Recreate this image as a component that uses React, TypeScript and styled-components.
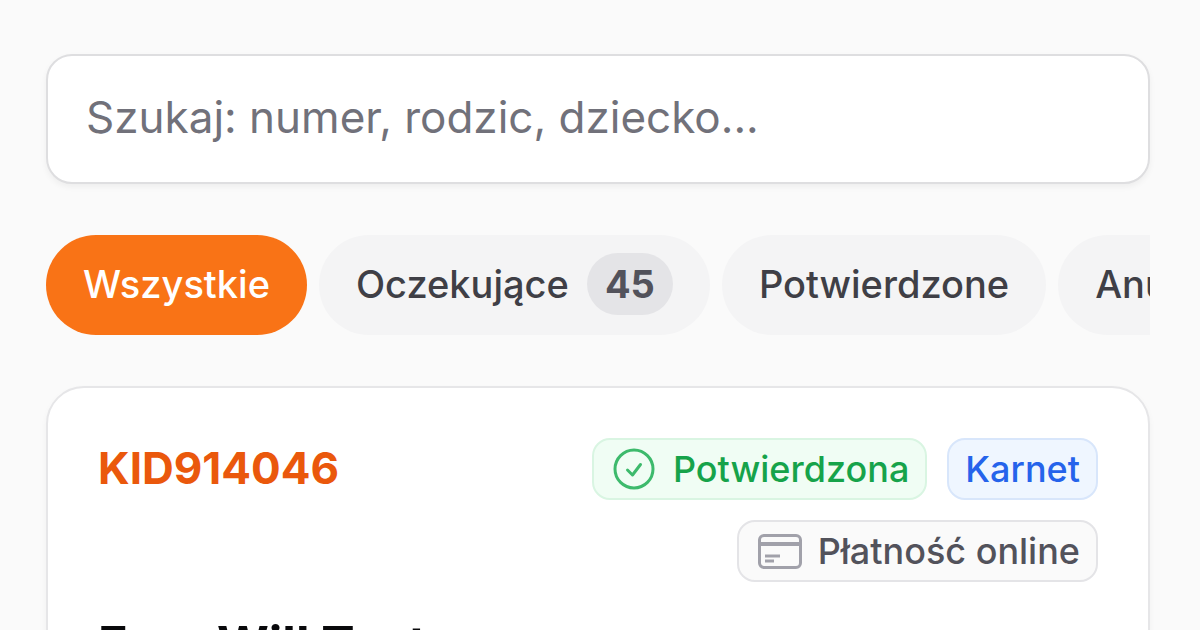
import React from "react";
import styled, { createGlobalStyle, css } from "styled-components";

const GlobalStyle = createGlobalStyle`
  *, *::before, *::after { box-sizing: border-box; }
  html { height: 100%; overflow: hidden; }
  body {
    margin: 0;
    background: #fafafa;
    color: #09090b;
    font-family: Inter, "Liberation Sans", sans-serif;
  }
`;

const Page = styled.main`
  display: flex;
  flex-direction: column;
  gap: 51px;
  padding: 54px 50px 0 46px;
`;

const SearchField = styled.input`
  width: 100%;
  padding: 32px 38px 36px;
  border: 2px solid #dedee0;
  border-radius: 26px;
  background: #fff;
  box-shadow: 0 3px 6px rgba(0, 0, 0, 0.05);
  color: #09090b;
  font-family: inherit;
  font-size: 44px;
  line-height: 58px;
  outline: none;
  &::placeholder { color: #71717a; opacity: 1; }
`;

const Filters = styled.div`
  display: flex;
  gap: 12px;
  overflow: hidden;
`;

const Chip = styled.button<{ $active?: boolean }>`
  display: flex;
  flex: none;
  align-items: center;
  gap: 18px;
  height: 100px;
  padding: 0 37px 2px;
  border: 0;
  border-radius: 50px;
  background: ${(p) => (p.$active ? "#f97316" : "#f4f4f5")};
  color: ${(p) => (p.$active ? "#fff" : "#3f3f46")};
  font-family: inherit;
  font-size: 38px;
  font-weight: 500;
  line-height: 50px;
`;

const Count = styled.span`
  padding: 6px 18px;
  border-radius: 32px;
  background: #e4e4e7;
  color: #52525b;
  font-weight: 700;
`;

const Card = styled.article`
  padding: 50px 50px 60px;
  border: 2px solid #e6e6e8;
  border-radius: 38px;
  background: #fff;
  box-shadow: 0 3px 6px rgba(0, 0, 0, 0.04);
`;

const CardHeader = styled.header`
  display: flex;
  align-items: flex-start;
  justify-content: space-between;
`;

const OrderLink = styled.a`
  color: #ea580c;
  font-size: 44px;
  font-weight: 700;
  line-height: 60px;
  text-decoration: none;
`;

const Badges = styled.div`
  display: flex;
  flex-wrap: wrap;
  justify-content: flex-end;
  gap: 20px;
  max-width: 56%;
`;

const tones = {
  green: css`border-color: #d9f5e2; background: #f0fdf4; color: #16a34a;`,
  blue: css`border-color: #d8e6fb; background: #eff6ff; color: #2563eb;`,
  gray: css`border-color: #e4e4e7; background: #fafafa; color: #52525b;`,
};

const Badge = styled.span<{ $tone: keyof typeof tones }>`
  display: inline-flex;
  align-items: center;
  gap: 15px;
  height: 62px;
  padding: 0 16px;
  border: 2px solid;
  border-radius: 18px;
  font-size: 36px;
  font-weight: 500;
  line-height: 50px;
  ${(p) => tones[p.$tone]}
`;

const BadgeIcon = styled.svg`
  flex: none;
  width: 48px;
  height: 48px;
`;

const CustomerName = styled.h2`
  margin: 32px 0 0;
  font-size: 50px;
  font-weight: 700;
  line-height: 60px;
`;

const CheckIcon = () => (
  <BadgeIcon viewBox="0 0 48 48" fill="none" stroke="#3dba6c" strokeWidth="3" strokeLinecap="round" strokeLinejoin="round" aria-hidden="true">
    <circle cx="24" cy="24" r="19" />
    <path d="M17.500 25l5 5 8-10.500" />
  </BadgeIcon>
);

const CardIcon = () => (
  <BadgeIcon viewBox="0 0 48 48" fill="none" stroke="#a1a1aa" strokeWidth="3" aria-hidden="true">
    <rect x="4.500" y="8.500" width="41" height="32" rx="4.500" />
    <path d="M4.500 17h41" strokeWidth="4" />
    <path d="M10 29h15M10 34h9" />
  </BadgeIcon>
);

export default function App() {
  return (
    <>
      <GlobalStyle />
      <Page>
        <SearchField type="search" aria-label="Szukaj" placeholder="Szukaj: numer, rodzic, dziecko..." />
        <Filters>
          <Chip type="button" $active>Wszystkie</Chip>
          <Chip type="button">Oczekujące <Count>45</Count></Chip>
          <Chip type="button">Potwierdzone</Chip>
          <Chip type="button">Anulowane</Chip>
        </Filters>
        <Card>
          <CardHeader>
            <OrderLink href="#KID914046">KID914046</OrderLink>
            <Badges>
              <Badge $tone="green"><CheckIcon />Potwierdzona</Badge>
              <Badge $tone="blue">Karnet</Badge>
              <Badge $tone="gray"><CardIcon />Płatność online</Badge>
            </Badges>
          </CardHeader>
          <CustomerName>Free Will Test</CustomerName>
        </Card>
      </Page>
    </>
  );
}
